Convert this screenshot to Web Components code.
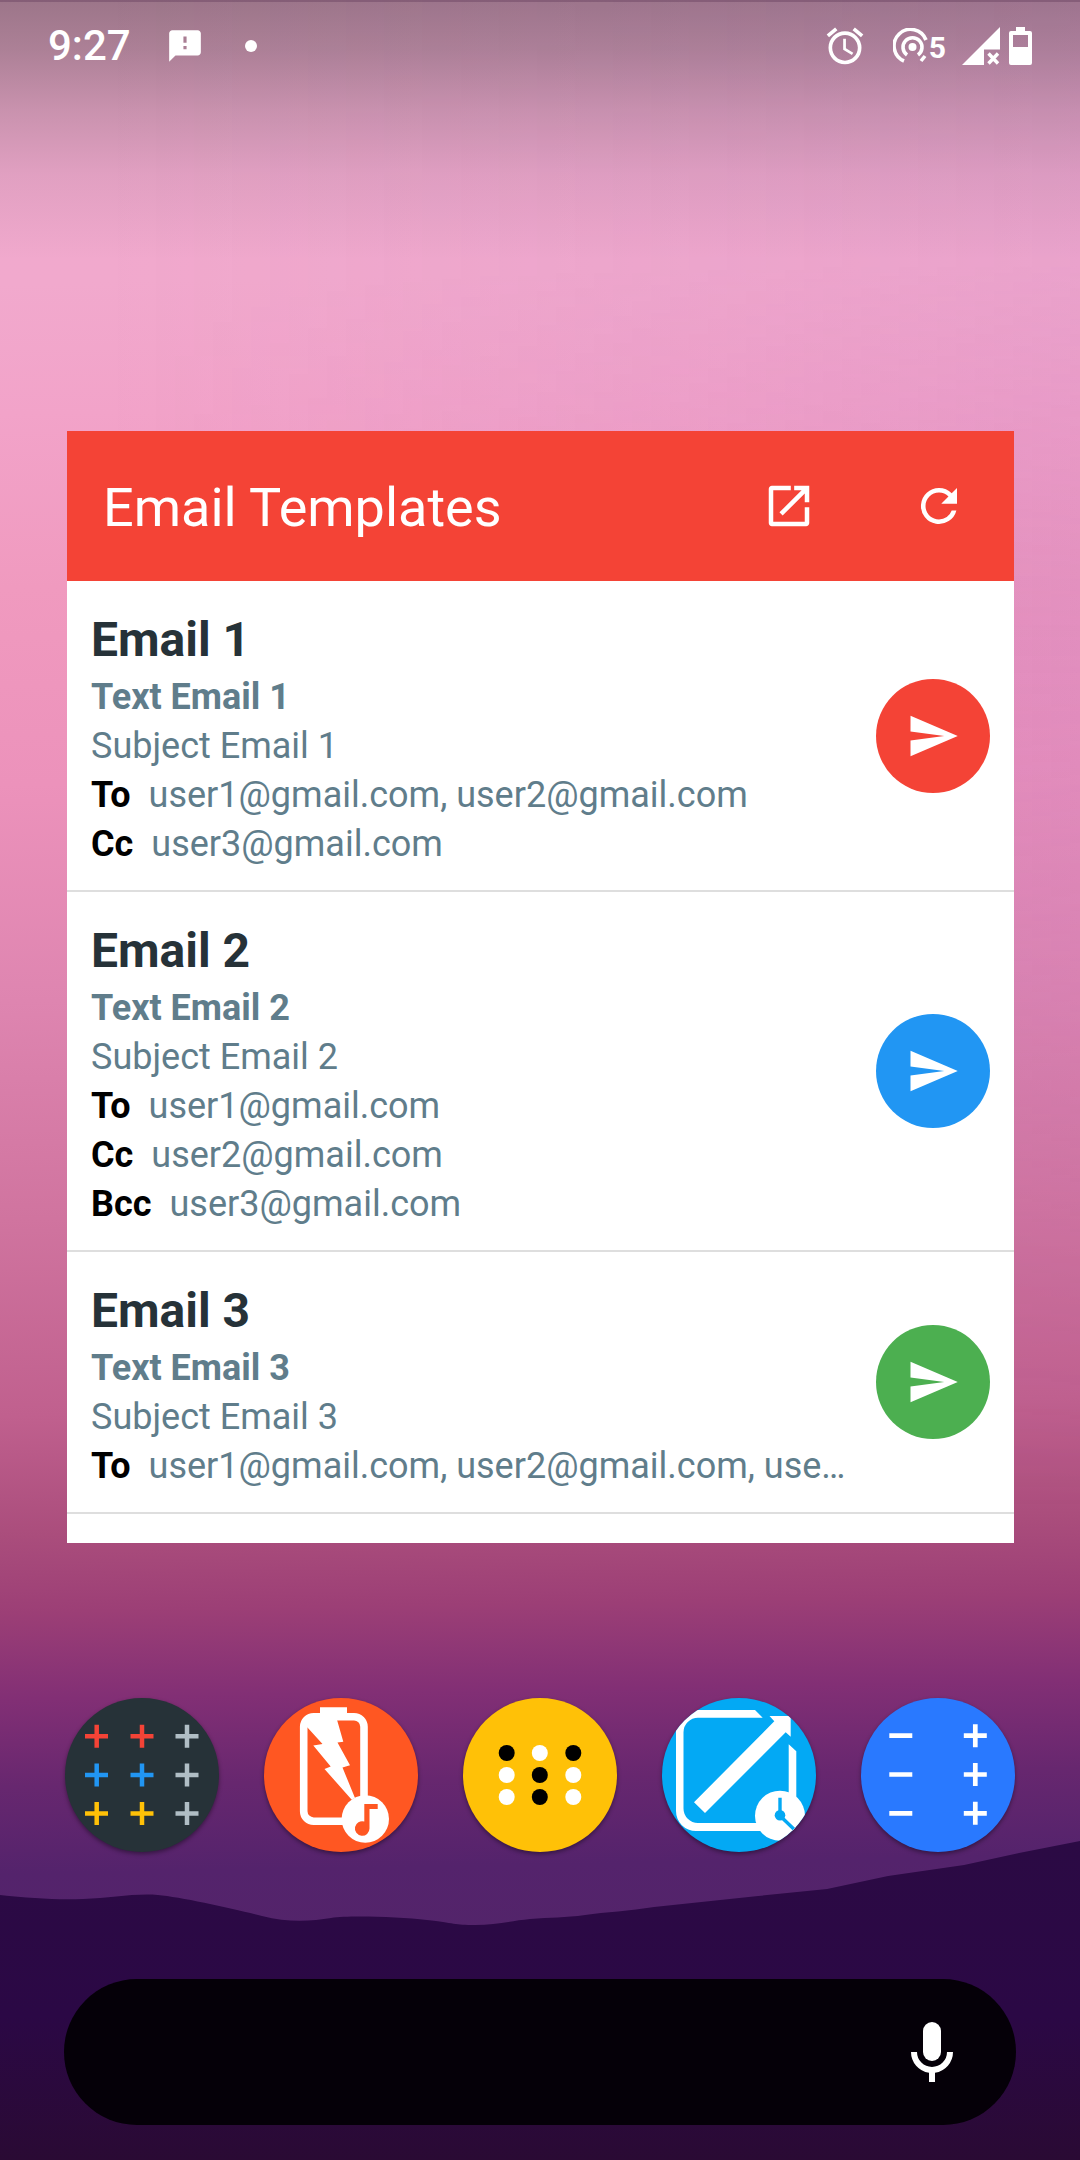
<!DOCTYPE html>
<html lang="en">
<head>
<meta charset="utf-8">
<meta name="viewport" content="width=device-width, initial-scale=1">
<title>Email Templates</title>
<style>
  html, body { margin: 0; }
  body { font-family: Roboto, "Noto Sans", sans-serif; background: #2a0a42; }
</style>
</head>
<body>
<home-screen>
  <status-bar slot="status" time="9:27"></status-bar>
  <template-widget heading="Email Templates">
    <template-row heading="Email 1" text="Text Email 1" subject="Subject Email 1" color="#f44336">
      <mail-line label="To">user1@gmail.com, user2@gmail.com</mail-line>
      <mail-line label="Cc">user3@gmail.com</mail-line>
    </template-row>
    <template-row heading="Email 2" text="Text Email 2" subject="Subject Email 2" color="#2196f3">
      <mail-line label="To">user1@gmail.com</mail-line>
      <mail-line label="Cc">user2@gmail.com</mail-line>
      <mail-line label="Bcc">user3@gmail.com</mail-line>
    </template-row>
    <template-row heading="Email 3" text="Text Email 3" subject="Subject Email 3" color="#4caf50">
      <mail-line label="To">user1@gmail.com, user2@gmail.com, user3@gmail.com</mail-line>
    </template-row>
  </template-widget>
  <app-dock slot="dock">
    <app-icon label="Counters" color="#263238">
      <svg viewBox="0 0 154 154" fill="none" stroke-width="4.5">
        <path stroke="#f44336" d="M20 38.300h23M31.700 26.800v23M65.500 38.300h23M77 26.800v23"/>
        <path stroke="#2196f3" d="M20 77h23M31.700 65.500v23M65.500 77h23M77 65.500v23"/>
        <path stroke="#ffc107" d="M20 115.500h23M31.700 104v23M65.500 115.500h23M77 104v23"/>
        <path stroke="#b0bec5" d="M110.500 38.300h23M122 26.800v23M110.500 77h23M122 65.500v23M110.500 115.500h23M122 104v23"/>
      </svg>
    </app-icon>
    <app-icon label="Battery sound" color="#ff5722">
      <svg viewBox="0 0 154 154" fill="#fff">
        <rect x="39.700" y="18.700" width="60.300" height="104.500" rx="10" fill="none" stroke="#fff" stroke-width="7.600"/>
        <path d="M56 9.300h27v8H56z"/>
        <path d="M42 20L72.500 20L79.300 43.700L73.500 44.500L86 67.300L78.500 69.500L91 100L87.500 101.500L60.500 71L66.700 68.500L49.300 47.500L58.500 46L43.700 29.700L41 28z"/>
        <circle cx="101.300" cy="121" r="23.700"/>
        <path fill="#ff5722" d="M100.300 106h13.400v5H105.500V130.500a7.300 7.300 0 1 1-5.200-7z"/>
      </svg>
    </app-icon>
    <app-icon label="Dots" color="#ffc107">
      <svg viewBox="0 0 154 154">
        <g fill="#000"><circle cx="43.700" cy="55" r="8"/><circle cx="110.300" cy="55" r="8"/><circle cx="76.800" cy="77" r="8"/><circle cx="76.800" cy="99" r="8"/></g>
        <g fill="#fff"><circle cx="76.800" cy="55" r="8"/><circle cx="43.700" cy="77" r="8"/><circle cx="110.300" cy="77" r="8"/><circle cx="43.700" cy="99" r="8"/><circle cx="110.300" cy="99" r="8"/></g>
      </svg>
    </app-icon>
    <app-icon label="Screen timer" color="#03a9f4">
      <svg viewBox="0 0 154 154" fill="#fff">
        <path d="M93 12L100.700 19.700H36a14.500 14.500 0 0 0-14.500 14.500V110.500A14.500 14.500 0 0 0 36 125H126.700V46.300L134.300 53.300V133H34A20 20 0 0 1 14 113V32A20 20 0 0 1 34 12z"/>
        <path d="M107.500 18h21.200v20.700L123.700 34.300L43 115L32 104.300L112.300 23.300z"/>
        <circle cx="118" cy="117.700" r="25"/>
        <circle cx="118" cy="117.300" r="5.300" fill="#03a9f4"/>
        <path d="M118 99.700v18l14 13.500" fill="none" stroke="#03a9f4" stroke-width="3.400"/>
      </svg>
    </app-icon>
    <app-icon label="Plus minus" color="#2979ff">
      <svg viewBox="0 0 154 154" fill="none" stroke="#fff" stroke-width="4.700">
        <path d="M28.300 37.700h23M28.300 76.500h23M28.300 115.300h23M102.800 37.700h23M114.300 26.200v23M102.800 76.500h23M114.300 65v23M102.800 115.300h23M114.300 103.800v23"/>
      </svg>
    </app-icon>
  </app-dock>
  <search-pill slot="dock"></search-pill>
</home-screen>

<script>
const define = (name, html, setup) => {
  const tpl = document.createElement('template');
  tpl.innerHTML = html;
  customElements.define(name, class extends HTMLElement {
    constructor() {
      super();
      this.attachShadow({ mode: 'open' }).append(tpl.content.cloneNode(true));
    }
    connectedCallback() { if (setup) setup(this, s => this.shadowRoot.querySelector(s)); }
  });
};

define('wall-paper', `
  <style>
    :host { display: block; position: relative; overflow: hidden;
      background:
        linear-gradient(180deg, rgba(80,70,75,.52) 0, rgba(80,72,75,.42) 50px, rgba(90,80,85,.26) 110px, rgba(90,80,90,.1) 175px, rgba(90,80,90,0) 260px),
        linear-gradient(179deg, #efa9cd 0, #f1a9cd 13%, #f2a3c9 19%, #f09abf 27%, #ec92bb 36%, #de85b0 46%, #d0749f 56%, #c0608e 65%, #aa4d7c 70.500%, #9c3f76 74%, #822f75 78%, #67276f 82%, #54236c 86%, #53246a 89%); }
    .tint, svg { position: absolute; inset: 0; display: block; width: 100%; height: 100%; }
    .tint { background: linear-gradient(90deg, rgba(175,110,195,0) 10%, rgba(175,110,195,.2));
      -webkit-mask-image: linear-gradient(rgba(0,0,0,.5) 12%, #000 30%, transparent 70%); mask-image: linear-gradient(rgba(0,0,0,.5) 12%, #000 30%, transparent 70%); }
  </style>
  <div class="tint"></div>
  <svg viewBox="0 0 1080 2160" preserveAspectRatio="none" aria-hidden="true">
    <defs>
      <linearGradient id="hill" x1="0" y1="0" x2="0" y2="1">
        <stop offset="0" stop-color="#2b0a44"/><stop offset=".55" stop-color="#2b0845"/><stop offset="1" stop-color="#2a0a34"/>
      </linearGradient>
    </defs>
    <path fill="url(#hill)" d="M0 1895C30 1898 55 1900 83 1899S135 1893 158 1895S235 1909 262 1916S312 1921 331 1918S400 1917 427 1920S455 1925 475 1925S510 1921 530 1919S565 1918 585 1915S630 1911 654 1907L758 1896L827 1889L888 1876L964 1865L1019 1853L1080 1841V2160H0z"/>
  </svg>`);

define('home-screen', `
  <style>
    :host { display: grid; grid-template-columns: minmax(0, 1fr); min-height: 100vh; }
    wall-paper, .content { grid-area: 1 / 1; }
    .content { position: relative; display: flex; flex-direction: column; box-sizing: border-box; padding-bottom: 35px; }
    main { margin: 341px 66px 155px 67px; }
    .dock { display: flex; flex-direction: column; gap: 127px; margin: auto 64px 0; }
  </style>
  <wall-paper></wall-paper>
  <div class="content">
    <slot name="status"></slot>
    <main><slot></slot></main>
    <div class="dock"><slot name="dock"></slot></div>
  </div>`);

define('status-bar', `
  <style>
    :host { display: flex; align-items: center; justify-content: space-between; height: 90px; padding: 0 48px; color: #fff; box-sizing: border-box;
      border-top: 2px solid rgba(110,70,100,.5); }
    .side { display: flex; align-items: center; }
    time { font-size: 42px; line-height: 50px; font-weight: 500; }
    svg { display: block; fill: currentColor; }
    .note { margin-left: 35px; }
    .dot { width: 12px; height: 12px; margin-left: 41px; border-radius: 50%; background: currentColor; }
    .spot { display: flex; align-items: center; margin: 0 16px 0 26px; }
    .spot span { font-size: 30px; line-height: 36px; font-weight: 700; margin-top: 4px; }
    .bat { margin-left: 9px; }
  </style>
  <div class="side">
    <time></time>
    <svg class="note" width="38" height="38" viewBox="0 0 24 24"><path d="M20 2H4c-1.100 0-2 .9-2 2v18l4-4h14c1.100 0 2-.9 2-2V4c0-1.100-.9-2-2-2zm-7 12h-2v-2h2v2zm0-4h-2V6h2v4z"/></svg>
    <span class="dot"></span>
  </div>
  <div class="side">
    <svg width="44" height="44" viewBox="0 0 24 24"><path d="M22 5.720l-4.600-3.860-1.290 1.530 4.600 3.860L22 5.720zM7.880 3.390L6.600 1.860 2 5.710l1.290 1.530 4.590-3.850zM12.500 8H11v6l4.750 2.850.75-1.230-4-2.370V8zM12 4c-4.970 0-9 4.030-9 9s4.020 9 9 9a9 9 0 0 0 0-18zm0 16c-3.870 0-7-3.130-7-7s3.130-7 7-7 7 3.130 7 7-3.130 7-7 7z"/></svg>
    <div class="spot">
      <svg width="36" height="36" viewBox="0 0 36 36" style="fill:none;stroke:currentColor;stroke-width:3.600">
        <path d="M11 33A16.500 16.500 0 1 1 33 12"/><path d="M14 27A9.500 9.500 0 1 1 25 27"/><path d="M28 33l4-5"/>
        <circle cx="19.500" cy="19" r="4" fill="currentColor" stroke="none"/>
      </svg><span>5</span>
    </div>
    <svg width="38" height="38" viewBox="0 0 38 38"><path d="M38 0V22.500H22V38H0z"/><path d="M26.500 26.500l9.500 10M36 26.500l-9.500 10" stroke="currentColor" stroke-width="3.400"/></svg>
    <svg class="bat" width="23" height="38" viewBox="0 0 23 38"><path fill-rule="evenodd" d="M7 0h9v4h5a2 2 0 0 1 2 2v30a2 2 0 0 1-2 2H2a2 2 0 0 1-2-2V6a2 2 0 0 1 2-2h5zM4 8v12h15V8z"/></svg>
  </div>`,
  (el, $) => { $('time').textContent = el.getAttribute('time'); });

define('template-widget', `
  <style>
    :host { display: block; background: #fff; }
    header { display: flex; align-items: center; height: 150px; padding-left: 36px; background: #f44336; color: #fff; }
    h1 { flex: 1; margin: 0; padding-top: 4px; font-size: 54px; line-height: 64px; font-weight: 400; }
    button { display: grid; place-items: center; width: 150px; height: 150px; padding: 0; border: 0; background: none; color: inherit; }
    svg { width: 54px; height: 54px; fill: currentColor; }
    .list { padding-bottom: 29px; }
  </style>
  <header>
    <h1></h1>
    <button type="button" aria-label="Open app"><svg viewBox="0 0 24 24"><path d="M4.400 3H12.800v2H5v14h14v-6.500h2v7.100c0 .8-.6 1.400-1.400 1.400H4.400C3.600 21 3 20.400 3 19.600V4.400C3 3.600 3.600 3 4.400 3zM14.300 3v2h3.290l-9.830 9.830 1.410 1.410L19 6.410V10.300h2V3h-6.700z"/></svg></button>
    <button type="button" aria-label="Refresh"><svg viewBox="0 0 24 24"><path d="M17.650 6.350A7.958 7.958 0 0 0 12 4a8 8 0 1 0 7.730 10h-2.080A5.990 5.990 0 0 1 12 18c-3.310 0-6-2.690-6-6s2.690-6 6-6c1.660 0 3.140.69 4.220 1.780L13 11h7V4l-2.350 2.350z"/></svg></button>
  </header>
  <div class="list"><slot></slot></div>`,
  (el, $) => { $('h1').textContent = el.getAttribute('heading'); });

define('template-row', `
  <style>
    :host { display: flex; align-items: center; gap: 24px; padding: 0 24px; border-bottom: 2px solid #dedede; color: #607d8b; }
    .info { flex: 1; min-width: 0; padding: 26px 0 21px; font-size: 36px; line-height: 49px; }
    h2, p { margin: 0; }
    h2 { font-size: 48px; line-height: 66px; font-weight: 700; color: #263238; }
    .text { font-weight: 700; }
    button { display: grid; place-items: center; flex: none; width: 114px; height: 114px; padding: 0; border: 0; border-radius: 50%; color: #fff; }
    svg { width: 54px; height: 54px; fill: currentColor; }
  </style>
  <div class="info">
    <h2></h2>
    <p class="text"></p>
    <p class="subject"></p>
    <slot></slot>
  </div>
  <button type="button"><svg viewBox="0 0 24 24"><path d="M2.010 21L23 12 2.010 3 2 10l15 2-15 2z"/></svg></button>`,
  (el, $) => {
    $('h2').textContent = el.getAttribute('heading');
    $('.text').textContent = el.getAttribute('text');
    $('.subject').textContent = el.getAttribute('subject');
    $('button').style.backgroundColor = el.getAttribute('color');
    $('button').setAttribute('aria-label', 'Send ' + el.getAttribute('heading'));
  });

define('mail-line', `
  <style>
    :host { display: flex; gap: 18px; }
    b { color: #000; }
    span { min-width: 0; overflow: hidden; white-space: nowrap; text-overflow: ellipsis; }
  </style>
  <b></b><span><slot></slot></span>`,
  (el, $) => { $('b').textContent = el.getAttribute('label'); });

define('app-dock', `
  <style>:host { display: flex; justify-content: space-between; margin: 0 1px; }</style>
  <slot></slot>`);

define('app-icon', `
  <style>
    :host { display: block; }
    button { display: block; width: 154px; height: 154px; padding: 0; border: 0; border-radius: 50%; overflow: hidden;
      box-shadow: 0 2px 4px rgba(0,0,0,.4); }
    ::slotted(svg) { display: block; width: 100%; height: 100%; }
  </style>
  <button type="button"><slot></slot></button>`,
  (el, $) => {
    $('button').style.backgroundColor = el.getAttribute('color');
    $('button').setAttribute('aria-label', el.getAttribute('label'));
  });

define('search-pill', `
  <style>
    :host { display: flex; align-items: center; height: 146px; border-radius: 73px; padding: 0 48px; background: #050008; }
    input { flex: 1; min-width: 0; height: 72px; padding: 0; border: 0; outline: 0; background: none; color: #fff; font: 36px Roboto, sans-serif; }
    button { width: 72px; height: 72px; padding: 0; border: 0; background: none; color: #fff; }
    svg { display: block; width: 72px; height: 72px; fill: currentColor; }
  </style>
  <input type="text" aria-label="Search">
  <button type="button" aria-label="Voice search"><svg viewBox="0 0 24 24"><rect x="9" y="2" width="6" height="13" rx="3"/><path d="M17 12a5 5 0 0 1-10 0H5a7 7 0 0 0 6 6.920V22h2v-3.080A7 7 0 0 0 19 12z"/></svg></button>`);
</script>
</body>
</html>
